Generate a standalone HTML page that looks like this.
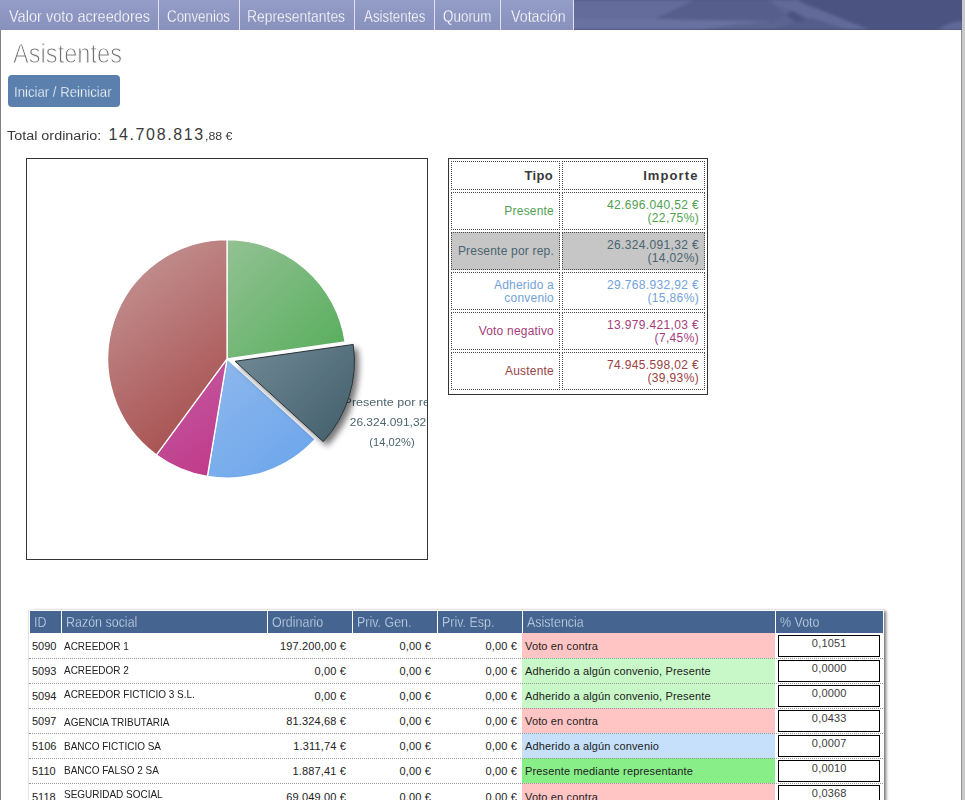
<!DOCTYPE html>
<html><head><meta charset="utf-8">
<style>
*{margin:0;padding:0;box-sizing:border-box}
html,body{width:965px;height:800px;overflow:hidden;background:#fff;font-family:"Liberation Sans",sans-serif}
.abs{position:absolute}
#nav{left:0;top:0;width:962px;height:30px;overflow:hidden}
.ni{position:absolute;top:0;height:30px;background:linear-gradient(#949cc8,#8890bc);color:#eceef8;font-size:17px;line-height:30px;white-space:nowrap;overflow:hidden}
.nt{position:absolute;top:1.5px;transform-origin:0 50%;color:#fff;-webkit-text-stroke:0.3px #8d95c0}
.sep{position:absolute;top:0;width:1px;height:30px;background:#dfe2f0}
#lb{left:0;top:30px;width:1px;height:770px;background:#808080}
#rb{left:961px;top:30px;width:1px;height:770px;background:#909090}
#rb2{left:962px;top:0;width:3px;height:800px;background:#c8c8c8}
#title{left:13px;top:38.5px;font-size:27px;line-height:31px;color:#707070;white-space:nowrap;-webkit-text-stroke:0.9px #fff}
#btn{left:8px;top:75px;width:112px;height:32px;background:#5b80ae;border-radius:4px;color:#fff;-webkit-text-stroke:0.3px #5b80ae;font-size:14.5px;line-height:32px;white-space:nowrap}
.tl{color:#3a3a3a;white-space:nowrap;line-height:1.15;transform-origin:0 0}
#chart{left:26px;top:158px;width:402px;height:402px;border:1px solid #333;overflow:hidden}
.lbl{position:absolute;font-size:11.5px;line-height:11.5px;color:#4d6570;white-space:nowrap;text-align:center;transform-origin:50% 0}
#t1{left:448px;top:158px;width:260px;height:237px;border:1px solid #333}
.c{position:absolute;border:1px dotted #4a4a4a}
.tt{position:absolute;font-size:12px;white-space:nowrap;letter-spacing:0.2px}
#t2{left:29px;top:610px;width:855px;height:200px;box-shadow:3px 0 3px -1px rgba(0,0,0,0.55),-1px 0 1px rgba(120,120,170,0.2);background:#fff}
.h{position:absolute;top:611px;height:22px;background:#456590;color:#c2cfe4;font-size:14px;line-height:22px;padding-left:4px;white-space:nowrap;overflow:hidden}
.hs{display:inline-block;transform-origin:0 50%;transform:scaleX(0.89);color:#d0dcef;-webkit-text-stroke:0.3px #456590}
.ab{position:absolute}
.r{position:absolute;font-size:11px;line-height:11px;color:#222;white-space:nowrap}
.r.nm{font-size:10.5px;line-height:10.5px;transform-origin:0 0;transform:scaleX(0.95)}
.r.as{letter-spacing:0.15px}
.dl{position:absolute;left:29px;width:854px;height:1px;border-top:1px dotted #999;z-index:2}
.inp{position:absolute;left:778px;width:102px;height:22px;border:1px solid #000;background:#fff;font-size:11px;line-height:11px;color:#3c3c3c;text-align:center;padding-top:1.6px;padding-left:0.5px;letter-spacing:0.2px}
</style></head><body>
<div id="nav" class="abs">
<svg id="wave" width="962" height="30" style="position:absolute;left:0;top:0">
<defs><filter id="wb" x="-5%" y="-50%" width="110%" height="200%"><feGaussianBlur stdDeviation="1.5"/></filter></defs>
<rect width="962" height="30" fill="#4b5480"/><g filter="url(#wb)">
<path d="M0,0 L800,0 C790,4 780,8 770,10 L770,30 L0,30 Z" fill="#69719f"/>
<path d="M0,8 C150,14 500,18 655,19 C670,12 684,4 694,0 L0,0 Z" fill="#646c9a"/>
<path d="M655,19 C670,12 684,4 694,0 L790,0 C800,6 790,14 775,21 C740,21 690,20 655,19 Z" fill="#565e8b"/>
<path d="M775,21 C790,14 800,6 795,0 L770,0 C776,8 786,18 810,30 L700,30 C720,26 750,23 775,21 Z" fill="#5c6590"/>
<path d="M765,0 L795,0 C815,8 840,18 870,30 L825,30 C810,20 790,8 765,0 Z" fill="#626b98"/>
<path d="M770,30 C790,24 805,20 812,18 L850,30 Z" fill="#555d8a"/>
<path d="M935,32 C945,24 955,21 964,21 L964,32 Z" fill="#616996"/></g>
<rect y="29" width="962" height="1" fill="#454e7a" opacity="0.5"/>
</svg>
<div class="ni" style="left:0px;width:158px"><span class="nt" style="left:9.3px;transform:scaleX(0.855)">Valor voto acreedores</span></div>
<div class="sep" style="left:158px"></div>
<div class="ni" style="left:159px;width:80px"><span class="nt" style="left:7.5px;transform:scaleX(0.784)">Convenios</span></div>
<div class="sep" style="left:239px"></div>
<div class="ni" style="left:240px;width:114px"><span class="nt" style="left:6.5px;transform:scaleX(0.817)">Representantes</span></div>
<div class="sep" style="left:354px"></div>
<div class="ni" style="left:355px;width:79px"><span class="nt" style="left:9.0px;transform:scaleX(0.783)">Asistentes</span></div>
<div class="sep" style="left:434px"></div>
<div class="ni" style="left:435px;width:65px"><span class="nt" style="left:8.0px;transform:scaleX(0.790)">Quorum</span></div>
<div class="sep" style="left:500px"></div>
<div class="ni" style="left:501px;width:72px"><span class="nt" style="left:9.5px;transform:scaleX(0.839)">Votación</span></div>
<div class="sep" style="left:573px"></div>
</div>
<div id="lb" class="abs"></div>
<div id="rb" class="abs"></div><div id="rb2" class="abs"></div>
<div id="title" class="abs"><span style="display:inline-block;transform-origin:0 0;transform:scaleX(0.875)">Asistentes</span></div>
<div id="btn" class="abs"><span style="position:absolute;left:6px;top:1px;transform-origin:0 50%;transform:scaleX(0.91)">Iniciar / Reiniciar</span></div>
<div class="abs tl" style="left:6.5px;top:129px;font-size:12.5px;transform:scaleX(1.15)">Total ordinario:</div>
<div class="abs tl" style="left:108.5px;top:126px;font-size:16px;letter-spacing:1.62px;color:#3a3a3a">14.708.813</div>
<div class="abs tl" style="left:204.5px;top:130px;font-size:11px;transform:scaleX(1.12)">,88 €</div>
<div id="chart" class="abs"><div class="lbl" style="left:315.4px;top:238px;width:100px;transform:scaleX(1.09)">Presente por rep.</div>
<div class="lbl" style="left:311.2px;top:258px;width:100px;transform:scaleX(1.04)">26.324.091,32</div>
<div class="lbl" style="left:315.4px;top:277.5px;width:100px;transform:scaleX(0.97)">(14,02%)</div>
<svg width="400" height="400" style="position:absolute;left:0;top:0">
<defs>
<linearGradient id="gG" gradientUnits="userSpaceOnUse" x1="200" y1="80" x2="320" y2="200"><stop offset="0" stop-color="#93c293"/><stop offset="1" stop-color="#56ad5c"/></linearGradient>
<linearGradient id="gS" gradientUnits="userSpaceOnUse" x1="220" y1="185" x2="320" y2="285"><stop offset="0" stop-color="#6e8894"/><stop offset="1" stop-color="#445e6c"/></linearGradient>
<linearGradient id="gB" gradientUnits="userSpaceOnUse" x1="180" y1="200" x2="290" y2="320"><stop offset="0" stop-color="#90b8ec"/><stop offset="1" stop-color="#68a4ec"/></linearGradient>
<linearGradient id="gM" gradientUnits="userSpaceOnUse" x1="130" y1="210" x2="200" y2="320"><stop offset="0" stop-color="#c25aa0"/><stop offset="1" stop-color="#c03888"/></linearGradient>
<linearGradient id="gR" gradientUnits="userSpaceOnUse" x1="95" y1="110" x2="205" y2="250"><stop offset="0" stop-color="#c29090"/><stop offset="1" stop-color="#a85050"/></linearGradient>
<filter id="sh" x="-20%" y="-20%" width="150%" height="150%"><feGaussianBlur in="SourceAlpha" stdDeviation="3.2"/><feOffset dx="4" dy="4"/><feComponentTransfer><feFuncA type="linear" slope="0.55"/></feComponentTransfer><feMerge><feMergeNode/><feMergeNode in="SourceGraphic"/></feMerge></filter>
</defs>
<g stroke="#fff" stroke-width="1.3" stroke-linejoin="round">
<path fill="url(#gG)" d="M200.00,199.80 L200.00,80.50 A119.3,119.3 0 0 1 318.11,182.97 Z"/>
<path fill="url(#gB)" d="M200.00,199.80 L288.16,280.18 A119.3,119.3 0 0 1 180.41,317.48 Z"/>
<path fill="url(#gM)" d="M200.00,199.80 L180.41,317.48 A119.3,119.3 0 0 1 129.43,295.99 Z"/>
<path fill="url(#gR)" d="M200.00,199.80 L129.43,295.99 A119.3,119.3 0 0 1 200.00,80.50 Z"/>
</g>
<path fill="url(#gS)" stroke="#2a3238" stroke-width="1" filter="url(#sh)" d="M208.12,202.30 L326.23,185.48 A119.3,119.3 0 0 1 296.28,282.68 Z"/>
</svg>

</div>
<div id="t1" class="abs"></div>
<div class="c" style="left:451px;top:161px;width:109px;height:29px"></div>
<div class="c" style="left:562px;top:161px;width:143px;height:29px"></div>
<div class="tt" style="right:412px;top:168px;font-weight:bold;font-size:13px;color:#3a3a3a;letter-spacing:0.3px">Tipo</div>
<div class="tt" style="right:266.5px;top:168px;font-weight:bold;font-size:13px;color:#3a3a3a;letter-spacing:1.1px">Importe</div>
<div class="c" style="left:451px;top:192px;width:109px;height:38px;"></div>
<div class="c" style="left:562px;top:192px;width:143px;height:38px;"></div>
<div class="tt" style="right:411px;top:205px;color:#50a050;line-height:13px">Presente</div>
<div class="tt" style="right:266px;top:199px;color:#50a050;line-height:13px;text-align:right;letter-spacing:0.35px">42.696.040,52 €<br>(22,75%)</div>
<div class="c" style="left:451px;top:232px;width:109px;height:38px;background:#c6c6c6;"></div>
<div class="c" style="left:562px;top:232px;width:143px;height:38px;background:#c6c6c6;"></div>
<div class="tt" style="right:411px;top:245px;color:#4a6470;line-height:13px">Presente por rep.</div>
<div class="tt" style="right:266px;top:239px;color:#4a6470;line-height:13px;text-align:right;letter-spacing:0.35px">26.324.091,32 €<br>(14,02%)</div>
<div class="c" style="left:451px;top:272px;width:109px;height:38px;"></div>
<div class="c" style="left:562px;top:272px;width:143px;height:38px;"></div>
<div class="tt" style="right:411px;top:279px;color:#72a2d8;line-height:13px;text-align:right">Adherido a<br>convenio</div>
<div class="tt" style="right:266px;top:279px;color:#72a2d8;line-height:13px;text-align:right;letter-spacing:0.35px">29.768.932,92 €<br>(15,86%)</div>
<div class="c" style="left:451px;top:312px;width:109px;height:38px;"></div>
<div class="c" style="left:562px;top:312px;width:143px;height:38px;"></div>
<div class="tt" style="right:411px;top:325px;color:#a63c7a;line-height:13px">Voto negativo</div>
<div class="tt" style="right:266px;top:319px;color:#a63c7a;line-height:13px;text-align:right;letter-spacing:0.35px">13.979.421,03 €<br>(7,45%)</div>
<div class="c" style="left:451px;top:352px;width:109px;height:38px;"></div>
<div class="c" style="left:562px;top:352px;width:143px;height:38px;"></div>
<div class="tt" style="right:411px;top:365px;color:#9a4242;line-height:13px">Austente</div>
<div class="tt" style="right:266px;top:359px;color:#9a4242;line-height:13px;text-align:right;letter-spacing:0.35px">74.945.598,02 €<br>(39,93%)</div>
<div id="t2" class="abs"></div>
<div class="h" style="left:30px;width:31px"><span class="hs">ID</span></div>
<div class="h" style="left:62px;width:205px"><span class="hs">Razón social</span></div>
<div class="h" style="left:268px;width:84px"><span class="hs">Ordinario</span></div>
<div class="h" style="left:353px;width:84px"><span class="hs">Priv. Gen.</span></div>
<div class="h" style="left:438px;width:84px"><span class="hs">Priv. Esp.</span></div>
<div class="h" style="left:523px;width:252px"><span class="hs">Asistencia</span></div>
<div class="h" style="left:776px;width:107px"><span class="hs">% Voto</span></div>
<div class="ab" style="left:522px;top:633px;width:253px;height:25px;background:#ffc4c4"></div>
<div class="dl" style="top:658px"></div>
<div class="r" style="left:32px;top:641px">5090</div>
<div class="r nm" style="left:64px;top:640.70px">ACREEDOR 1</div>
<div class="r" style="right:619px;top:641px;letter-spacing:0.15px">197.200,00 €</div>
<div class="r" style="right:534px;top:641px;letter-spacing:0.15px">0,00 €</div>
<div class="r" style="right:448px;top:641px;letter-spacing:0.15px">0,00 €</div>
<div class="r as" style="left:525px;top:641px">Voto en contra</div>
<div class="inp" style="top:635px">0,1051</div>
<div class="ab" style="left:522px;top:658px;width:253px;height:25px;background:#c8f7c8"></div>
<div class="dl" style="top:683px"></div>
<div class="r" style="left:32px;top:666px">5093</div>
<div class="r nm" style="left:64px;top:664.85px">ACREEDOR 2</div>
<div class="r" style="right:619px;top:666px;letter-spacing:0.15px">0,00 €</div>
<div class="r" style="right:534px;top:666px;letter-spacing:0.15px">0,00 €</div>
<div class="r" style="right:448px;top:666px;letter-spacing:0.15px">0,00 €</div>
<div class="r as" style="left:525px;top:666px">Adherido a algún convenio, Presente</div>
<div class="inp" style="top:660px">0,0000</div>
<div class="ab" style="left:522px;top:683px;width:253px;height:25px;background:#c8f7c8"></div>
<div class="dl" style="top:708px"></div>
<div class="r" style="left:32px;top:691px">5094</div>
<div class="r nm" style="left:64px;top:688.85px">ACREEDOR FICTICIO 3 S.L.</div>
<div class="r" style="right:619px;top:691px;letter-spacing:0.15px">0,00 €</div>
<div class="r" style="right:534px;top:691px;letter-spacing:0.15px">0,00 €</div>
<div class="r" style="right:448px;top:691px;letter-spacing:0.15px">0,00 €</div>
<div class="r as" style="left:525px;top:691px">Adherido a algún convenio, Presente</div>
<div class="inp" style="top:685px">0,0000</div>
<div class="ab" style="left:522px;top:708px;width:253px;height:25px;background:#ffc4c4"></div>
<div class="dl" style="top:733px"></div>
<div class="r" style="left:32px;top:716px">5097</div>
<div class="r nm" style="left:64px;top:716.50px">AGENCIA TRIBUTARIA</div>
<div class="r" style="right:619px;top:716px;letter-spacing:0.15px">81.324,68 €</div>
<div class="r" style="right:534px;top:716px;letter-spacing:0.15px">0,00 €</div>
<div class="r" style="right:448px;top:716px;letter-spacing:0.15px">0,00 €</div>
<div class="r as" style="left:525px;top:716px">Voto en contra</div>
<div class="inp" style="top:710px">0,0433</div>
<div class="ab" style="left:522px;top:733px;width:253px;height:25px;background:#c6e0fb"></div>
<div class="dl" style="top:758px"></div>
<div class="r" style="left:32px;top:741px">5106</div>
<div class="r nm" style="left:64px;top:740.80px">BANCO FICTICIO SA</div>
<div class="r" style="right:619px;top:741px;letter-spacing:0.15px">1.311,74 €</div>
<div class="r" style="right:534px;top:741px;letter-spacing:0.15px">0,00 €</div>
<div class="r" style="right:448px;top:741px;letter-spacing:0.15px">0,00 €</div>
<div class="r as" style="left:525px;top:741px">Adherido a algún convenio</div>
<div class="inp" style="top:735px">0,0007</div>
<div class="ab" style="left:522px;top:758px;width:253px;height:25px;background:#88ee88"></div>
<div class="dl" style="top:783px"></div>
<div class="r" style="left:32px;top:766px">5110</div>
<div class="r nm" style="left:64px;top:764.80px">BANCO FALSO 2 SA</div>
<div class="r" style="right:619px;top:766px;letter-spacing:0.15px">1.887,41 €</div>
<div class="r" style="right:534px;top:766px;letter-spacing:0.15px">0,00 €</div>
<div class="r" style="right:448px;top:766px;letter-spacing:0.15px">0,00 €</div>
<div class="r as" style="left:525px;top:766px">Presente mediante representante</div>
<div class="inp" style="top:760px">0,0010</div>
<div class="ab" style="left:522px;top:783px;width:253px;height:25px;background:#ffc4c4"></div>
<div class="dl" style="top:808px"></div>
<div class="r" style="left:32px;top:792px">5118</div>
<div class="r nm" style="left:64px;top:788.60px">SEGURIDAD SOCIAL</div>
<div class="r" style="right:619px;top:792px;letter-spacing:0.15px">69.049,00 €</div>
<div class="r" style="right:534px;top:792px;letter-spacing:0.15px">0,00 €</div>
<div class="r" style="right:448px;top:792px;letter-spacing:0.15px">0,00 €</div>
<div class="r as" style="left:525px;top:792px">Voto en contra</div>
<div class="inp" style="top:785px">0,0368</div>
</body></html>
